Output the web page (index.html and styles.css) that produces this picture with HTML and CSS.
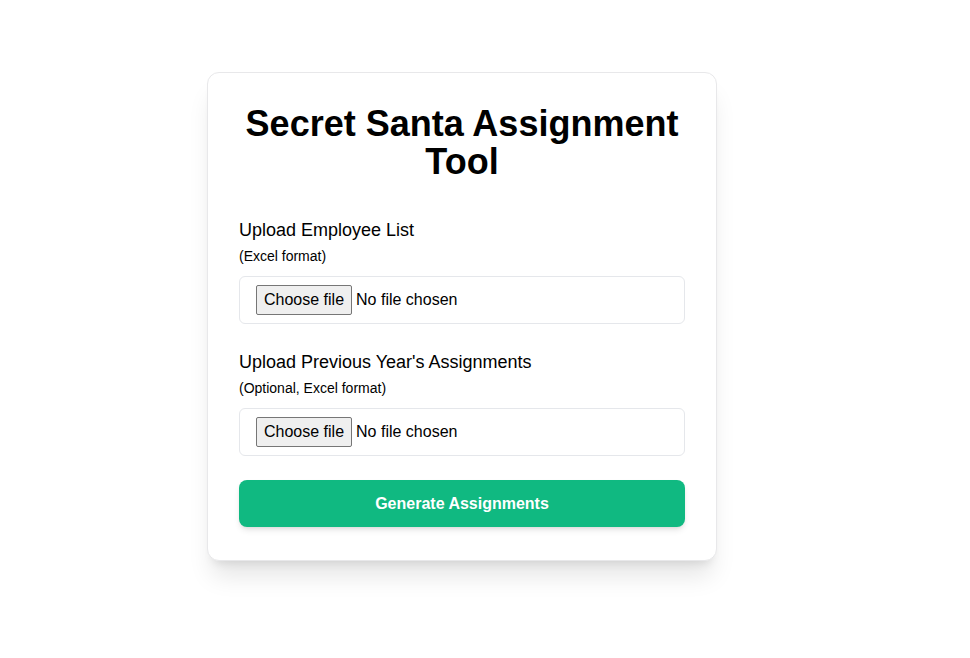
FILE: index.html
```html
<!DOCTYPE html>
<html lang="en">
<head>
<meta charset="utf-8">
<title>Secret Santa Assignment Tool</title>
<link rel="stylesheet" href="styles.css">
</head>
<body>
<div class="page">
  <div class="card">
    <h1 class="title">Secret Santa Assignment Tool</h1>
    <div class="field">
      <div class="label">Upload Employee List</div>
      <p class="hint">(Excel format)</p>
      <label class="file">
        <input class="file-input" type="file" accept=".xlsx,.xls">
        <span class="file-btn">Choose file</span>
        <span class="file-name">No file chosen</span>
      </label>
    </div>
    <div class="field">
      <div class="label">Upload Previous Year's Assignments</div>
      <p class="hint">(Optional, Excel format)</p>
      <label class="file">
        <input class="file-input" type="file" accept=".xlsx,.xls">
        <span class="file-btn">Choose file</span>
        <span class="file-name">No file chosen</span>
      </label>
    </div>
    <button class="generate" type="button">Generate Assignments</button>
  </div>
</div>
</body>
</html>
```
FILE: styles.css
```css
* { box-sizing: border-box; }
html, body {
  margin: 0;
  padding: 0;
  background: #ffffff;
  font-family: "Liberation Sans", Arial, sans-serif;
  color: #000;
}
.page {
  min-height: 658px;
  padding: 72px 0 80px 207px;
}
.card {
  width: 510px;
  background: #fff;
  border: 1px solid #e8e8ea;
  border-radius: 12px;
  padding: 32px 31px 33px;
  box-shadow: 0 20px 25px -5px rgba(0, 0, 0, 0.1), 0 8px 10px -6px rgba(0, 0, 0, 0.1);
}
.title {
  margin: 0 0 35px;
  text-align: center;
  font-size: 36px;
  line-height: 38px;
  font-weight: bold;
}
.field {
  margin-bottom: 24px;
}
.label {
  font-size: 18px;
  line-height: 28px;
}
.hint {
  margin: 2px 0 10px;
  font-size: 14px;
  line-height: 20px;
}
.file {
  display: flex;
  align-items: center;
  width: 100%;
  height: 48px;
  padding: 0 16px;
  border: 1px solid #e5e7eb;
  border-radius: 6px;
  font-size: 16px;
  background: #fff;
  cursor: pointer;
}
.file-input {
  display: none;
}
.file-btn {
  display: flex;
  align-items: center;
  height: 30px;
  padding: 0 7px;
  background: #efefef;
  border: 1px solid #767676;
  border-radius: 2px;
  color: #000;
}
.file-name {
  margin-left: 4px;
}
.generate {
  display: block;
  width: 100%;
  height: 47px;
  border: none;
  border-radius: 8px;
  background: #10b981;
  color: #fff;
  font-family: "Liberation Sans", Arial, sans-serif;
  font-size: 16px;
  font-weight: bold;
  box-shadow: 0 4px 6px -1px rgba(0, 0, 0, 0.1), 0 2px 4px -2px rgba(0, 0, 0, 0.1);
  cursor: pointer;
}
```
